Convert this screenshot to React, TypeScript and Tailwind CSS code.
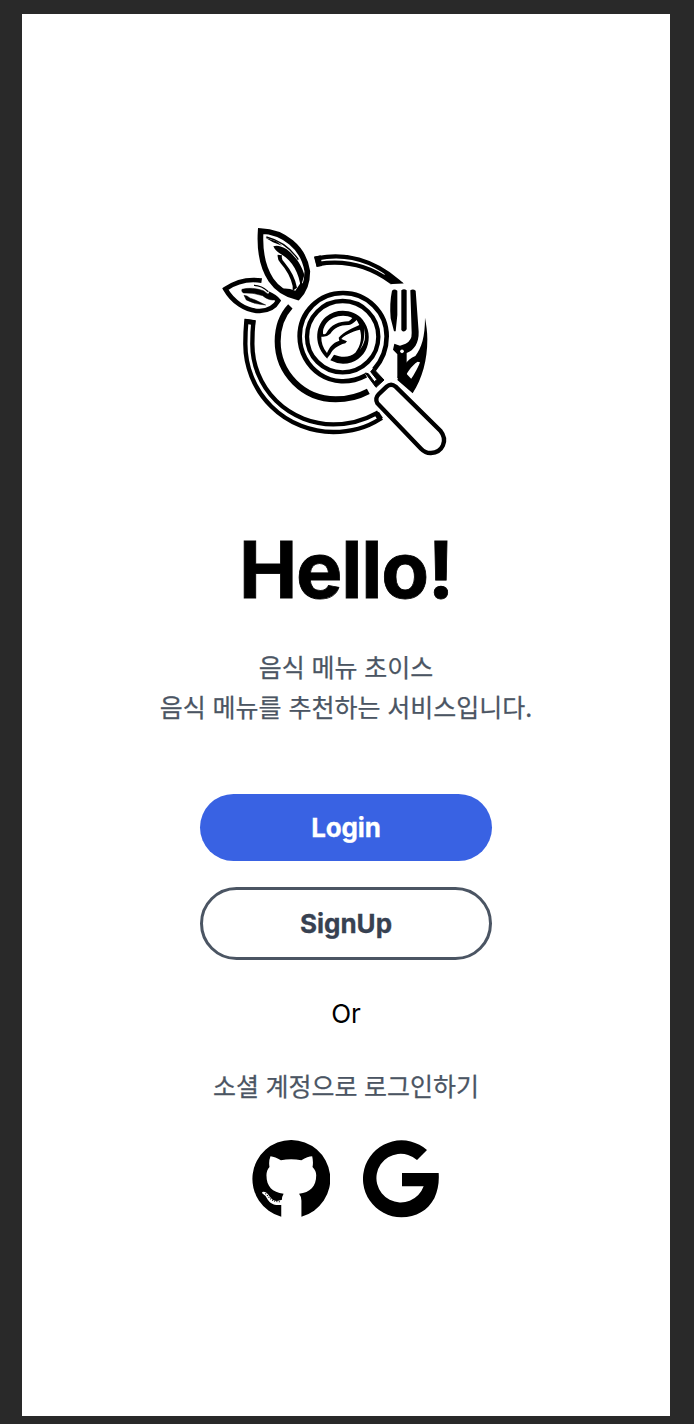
import React from "react";

function Logo() {
  return (
    <svg viewBox="0 0 720 720" className="block h-[240px] w-[240px]" fill="none" stroke="#000" strokeWidth="13" aria-hidden="true">
      {/* plate rim */}
      <path d="M94 304 Q91 335 91 372 A264 264 0 0 0 355 636 C405 636 455 623 495 597 L484 580 C445 602 400 613 355 613 A243 241 0 0 1 112 372 Q112 335 115 307 Z" />
      <path d="M90 304 L121 308" strokeWidth="15" />
      <path d="M485 580 L497 598" strokeWidth="16" />
      <path d="M306 115 C390 97 475 120 549 184 L526 184 C460 136 390 119 310 132 Z" />
      <path d="M526 184 L502 168 L515 160 L564 189 L526 193 Z" fill="#000" stroke="none" />
      <path d="M297 110 L317 106 L321 138 L305 141 Z" fill="#000" stroke="none" />
      <path d="M630 293 C634 315 637 335 637 358 C637 420 622 475 593 520 L547 480 C558 448 575 417 601 408 C620 383 630 350 630 293 Z M608 425 C590 436 570 464 566 483 L577 492 C594 472 608 445 615 427 Z" fill="#000" fillRule="evenodd" stroke="none" />
      {/* inner plate */}
      <path d="M226 259 C197 290 188 328 188 364 A174 174 0 0 0 362 538 Q415 538 460 514" strokeWidth="18" />
      {/* magnifier */}
      <path d="M453 466 C350 520 254 443 254 349 C254 275 313 219 384 219 C456 219 515 276 515 349 C515 390 500 423 477 449" strokeWidth="14" />
      <circle cx="383" cy="350" r="107" strokeWidth="13" />
      <path d="M451 459 L483 502 L507 480 L475 446 L467 455 L486 479 L478 485 L460 461 Z" fill="#000" strokeWidth="3" />
      <path d="M515 500 Q528 488 542 500 L676 632 C700 662 682 698 648 699 Q632 700 618 686 L487 550 Q479 535 491 523 Z" strokeWidth="13" />
      {/* emblem in the lens */}
      <path d="M337 416 C298 380 297 322 332 291 C367 262 417 269 443 299 C482 347 457 430 384 431 Q364 431 346 421 L357 404 C380 413 405 413 421 398 C439 375 441 350 435 329 C410 335 385 347 379 357 L396 364 L391 370 C367 376 352 389 346 403 L337 414 Z M324 341 Q329 346 334 339 C349 313 371 305 401 304 Q406 301 412 294 C386 280 350 289 333 311 Q322 327 324 341 Z M319 350 Q318 377 336 399 C343 383 352 368 373 362 L371 353 C388 335 412 324 433 315 L425 300 Q410 315 400 315 C374 315 357 325 346 341 Q333 353 319 350 Z M447 325 Q452 360 434 391 Q458 360 447 325 Z" fill="#000" fillRule="evenodd" stroke="none" />
      {/* fork */}
      <path d="M531 212 Q538 205 547 212 L547 285 L542 334 L537 334 L527 295 Q523 250 531 212 Z M559 211 Q567 205 575 211 L575 328 Q567 340 559 330 Z M586 211 Q594 205 602 212 L611 335 C612 370 597 390 575 399 L575 463 L565 486 L547 474 L547 403 L534 389 L538 371 L555 377 L572 371 Q591 362 590 339 Z" fill="#000" stroke="none" />
      <path d="M573 460 L594 482 L580 501 L547 471" fill="#000" stroke="none" />
      <circle cx="561" cy="394" r="5.5" fill="#fff" stroke="none" />
      {/* large leaf */}
      <path d="M137 33 C205 35 266 82 277 154 C277 189 267 214 248 232 C220 226 189 211 168 180 C145 145 133 95 137 33 Z" strokeWidth="17" />
      <path d="M154 51 Q215 67 250 119" strokeWidth="4" />
      <path d="M151 53 L184 64 L201 77 L174 67 Z M175 79 Q191 73 215 88 C246 112 262 142 268 165 L257 202 C253 160 231 122 202 105 Q181 94 175 79 Z M188 104 Q186 118 197 130 Q224 160 233 198 L233 212 L246 203 Q239 164 209 128 Q198 119 201 106 Z" fill="#000" stroke="none" />
      <path d="M199 206 Q220 203 241 212 L259 185 L271 200 L249 230 Z" fill="#000" stroke="none" />
      {/* small leaf */}
      <path d="M140 182 C101 176 63 185 31 207 C52 244 91 273 134 273 C162 272 179 262 190 242 Q180 230 160 221" strokeWidth="14" strokeLinejoin="miter" />
      <path d="M117 196 Q140 196 160 215" strokeWidth="4" />
      <path d="M81 208 Q110 200 145 212 L182 239 Q164 244 143 227 Q113 217 85 219 Q78 214 81 208 Z M87 226 L96 228 Q103 235 121 240 L152 255 Q121 254 94 240 Z" fill="#000" stroke="#000" strokeWidth="1.5" />
    </svg>
  );
}

function GithubIcon() {
  return (
    <svg viewBox="0 0 210 210" className="h-[78px] w-[78px]" aria-hidden="true">
      <g transform="scale(.9052)">
        <path d="M116 0 A116 116 0 0 0 87 228 L87 193 C67 196 54 189 46 176 Q41 165 32 160 Q27 155 34 154 Q43 154 52 167 C64 184 75 183 89 178 Q89 168 94 160 C60 156 43 138 43 105 Q43 90 52 80 Q49 63 55 48 Q69 49 86 60 Q116 54 147 60 Q166 48 179 48 Q183 65 180 80 Q191 91 191 105 C191 139 173 156 140 160 Q147 168 147 181 L147 228 A116 116 0 0 0 116 0 Z" fill="#000" />
        <path d="M40 159 L50 170 Q60 184 86 184" fill="none" stroke="#000" strokeWidth="3" strokeDasharray="3 4" />
      </g>
    </svg>
  );
}

function GoogleIcon() {
  return (
    <svg viewBox="0 0 228 234" className="h-[78px] w-[76px]" aria-hidden="true">
      <path d="M192 30 L162 60 A73 73 0 1 0 182 139 L117 139 L117 99 L227 99 Q230 139 214 175 C194 212 160 232 115 232 A115.500 115.500 0 1 1 192 30 Z" fill="#000" />
    </svg>
  );
}

export default function App() {
  return (
    <div className="h-[1424px] w-full bg-[#292929] pt-[14px] pr-[24px] pb-[8px] pl-[22px] font-['Inter','Noto_Sans_CJK_KR',sans-serif]">
      <main className="flex h-full flex-col items-center bg-white pt-[206px] text-[26px] leading-[40px]">
        <div className="mr-[22px]"><Logo /></div>
        <h1 className="mt-[70px] text-[78px] leading-[80px] font-bold tracking-[-1.2px] text-black [-webkit-text-stroke:0.8px_black]">Hello!</h1>
        <p className="mt-[36px] text-center text-[25px] leading-[40px] [word-spacing:1.2px] text-[#4b5563] [-webkit-text-stroke:0.25px_#4b5563] font-['Noto_Sans_CJK_KR',sans-serif]">
          음식 메뉴 초이스<br />음식 메뉴를 추천하는 서비스입니다.
        </p>
        <button className="mt-[68px] h-[67px] w-[292px] rounded-full bg-[#3962e3] font-bold tracking-[-0.2px] text-white [-webkit-text-stroke:0.3px_white]">Login</button>
        <button className="mt-[26px] h-[73px] w-[292px] rounded-full border-[3px] border-[#4b5563] pt-px font-bold text-[#374151] [-webkit-text-stroke:0.3px_#374151]">SignUp</button>
        <p className="mt-[34px] text-black">Or</p>
        <p className="mt-[31px] text-[25px] leading-[40px] [word-spacing:1px] text-[#4b5563] [-webkit-text-stroke:0.25px_#4b5563] font-['Noto_Sans_CJK_KR',sans-serif]">소셜 계정으로 로그인하기</p>
        <div className="mt-[35px] mr-[2px] flex gap-[33px]">
          <GithubIcon />
          <GoogleIcon />
        </div>
      </main>
    </div>
  );
}
